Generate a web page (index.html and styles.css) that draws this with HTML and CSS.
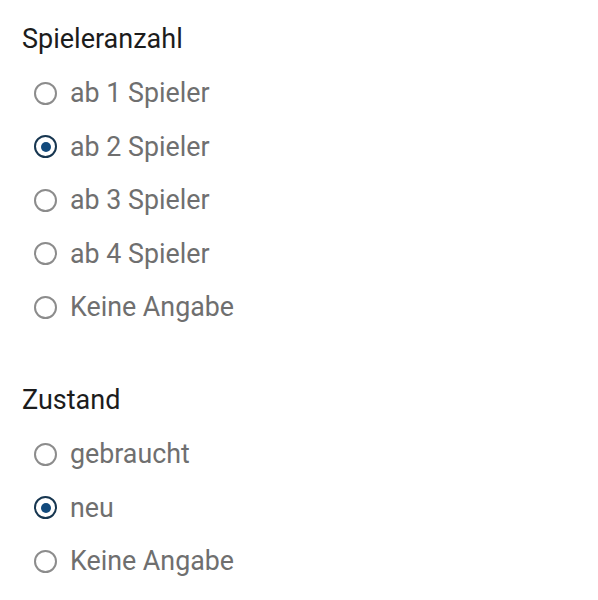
FILE: index.html
```html
<!DOCTYPE html>
<html lang="de">
 <head>
  <meta charset="utf-8">
  <title>Filter</title>
  <link rel="stylesheet" href="styles.css">
 </head>
 <body>
  <div class="filter">
   <div class="group">
    <div class="groupTitle">Spieleranzahl</div>
    <label class="option"><span class="radio"></span>ab 1 Spieler</label>
    <label class="option"><span class="radio checked"></span>ab 2 Spieler</label>
    <label class="option"><span class="radio"></span>ab 3 Spieler</label>
    <label class="option"><span class="radio"></span>ab 4 Spieler</label>
    <label class="option"><span class="radio"></span>Keine Angabe</label>
   </div>
   <div class="group">
    <div class="groupTitle">Zustand</div>
    <label class="option"><span class="radio"></span>gebraucht</label>
    <label class="option"><span class="radio checked"></span>neu</label>
    <label class="option"><span class="radio"></span>Keine Angabe</label>
   </div>
  </div>
 </body>
</html>
```
FILE: styles.css
```css
html, body {
    margin: 0;
    background-color: #ffffff;
}

div.filter {
    padding-top: 13px;
    padding-left: 22px;
    font-family: Roboto, "Liberation Sans", sans-serif;
}

div.group + div.group {
    margin-top: 40px;
}

div.groupTitle {
    height: 53.5px;
    line-height: 53.5px;
    font-size: 27px;
    color: #1c1c1c;
}

label.option {
    display: flex;
    align-items: center;
    height: 53.5px;
    font-size: 26.8px;
    color: #6f6f6f;
}

span.radio {
    box-sizing: border-box;
    width: 23px;
    height: 23px;
    margin-left: 12px;
    margin-right: 13px;
    border: 2.5px solid #8c8c8c;
    border-radius: 50%;
    display: flex;
    align-items: center;
    justify-content: center;
}

span.radio.checked {
    border-color: #173650;
}

span.radio.checked::after {
    content: "";
    width: 10px;
    height: 10px;
    border-radius: 50%;
    background-color: #124a7c;
}
```
